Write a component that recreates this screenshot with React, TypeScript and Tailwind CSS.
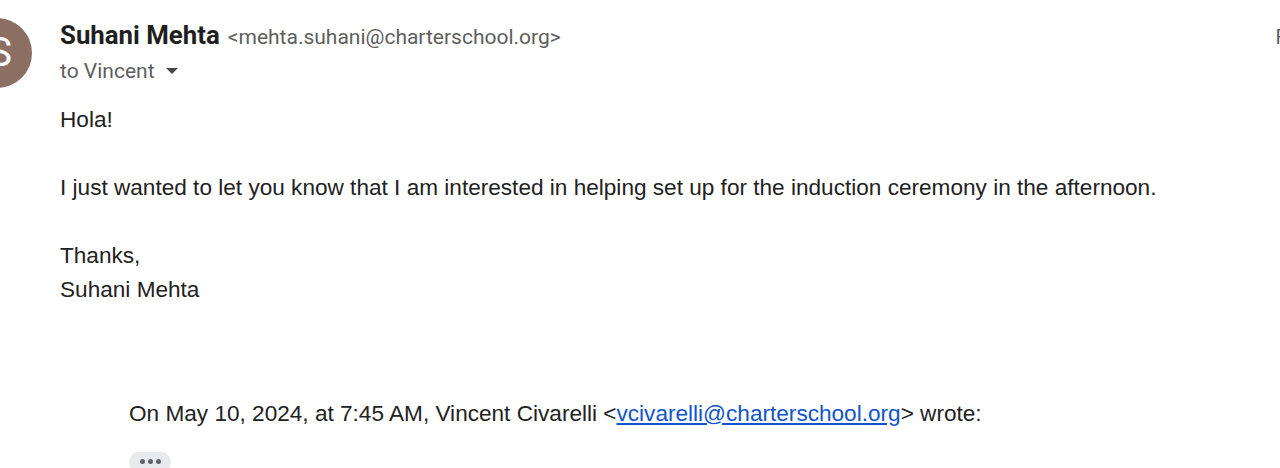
export default function App() {
  return (
    <div className="relative h-[468px] w-[1280px] overflow-hidden bg-white">
      {/* avatar, cut off at the left edge */}
      <div className="absolute left-[-38px] top-[18px] flex h-[70px] w-[70px] items-center justify-center rounded-full bg-[#8d6e63] pl-[6px] font-['Roboto',sans-serif] text-[40px] text-white">
        S
      </div>
      <div className="absolute right-[-18px] top-[22px] font-['Roboto',sans-serif] text-[20px] text-[#5e5e5e]">
        Fri
      </div>

      <div className="pl-[60px] pt-[18px]">
        <div className="flex items-baseline gap-[8px] font-['Roboto',sans-serif]">
          <span className="text-[25.8px] font-bold leading-[34px] text-[#1f1f1f]">Suhani Mehta</span>
          <span className="text-[21px] text-[#5e5e5e]">&lt;mehta.suhani@charterschool.org&gt;</span>
        </div>
        <div className="mt-[2px] flex items-center gap-[10px] font-['Roboto',sans-serif] text-[21px] leading-[30px] text-[#5e5e5e]">
          <span>to Vincent</span>
          <svg width="14" height="8" viewBox="0 0 14 8">
            <path d="M1 1 L7 7 L13 1 Z" fill="#444746" />
          </svg>
        </div>

        <div className="mt-[17px] font-['Liberation_Sans',Arial,sans-serif] text-[22.6px] leading-[34px] text-[#222222]">
          <div>Hola!</div>
          <div>&nbsp;</div>
          <div>
            I just wanted to let you know that I am interested in helping set up for the induction ceremony in the afternoon.
          </div>
          <div>&nbsp;</div>
          <div>Thanks,</div>
          <div>Suhani Mehta</div>
        </div>

        <div className="mt-[90px] pl-[69px] font-['Liberation_Sans',Arial,sans-serif] text-[22.6px] leading-[34px] text-[#222222]">
          <div>
            On May 10, 2024, at 7:45 AM, Vincent Civarelli &lt;
            <a href="#" className="text-[#1155cc] underline">vcivarelli@charterschool.org</a>
            &gt; wrote:
          </div>
          <button className="mt-[21px] flex h-[20px] w-[42px] items-center justify-center gap-[3px] rounded-full bg-[#e8eaed]">
            <span className="h-[5px] w-[5px] rounded-full bg-[#5f6368]" />
            <span className="h-[5px] w-[5px] rounded-full bg-[#5f6368]" />
            <span className="h-[5px] w-[5px] rounded-full bg-[#5f6368]" />
          </button>
        </div>
      </div>
    </div>
  );
}
